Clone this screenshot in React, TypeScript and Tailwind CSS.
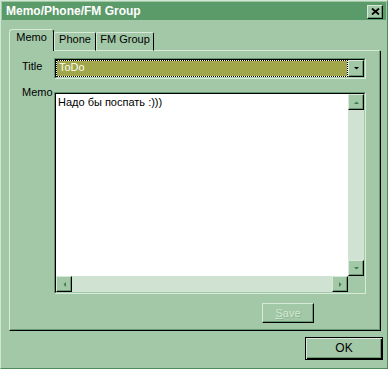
const raised =
  "border border-t-[#d7eada] border-l-[#d7eada] border-r-black border-b-black shadow-[inset_-1px_-1px_0_#6b9b73]";

function Arrow({ dir, color = "#3f7d4c" }: { dir: "up" | "down" | "left" | "right"; color?: string }) {
  const pts: Record<string, string> = {
    up: "0,3 5,3 2.5,0.5",
    down: "0,0 5,0 2.5,2.5",
    left: "3,0 3,5 0.5,2.5",
    right: "0,0 0,5 2.5,2.5",
  };
  const horiz = dir === "left" || dir === "right";
  return (
    <svg width={horiz ? 3 : 5} height={horiz ? 5 : 3} viewBox={horiz ? "0 0 3 5" : "0 0 5 3"}>
      <polygon points={pts[dir]} fill={color} />
    </svg>
  );
}

function ScrollButton({ dir }: { dir: "up" | "down" | "left" | "right" }) {
  return (
    <div className={`w-[16px] h-[16px] shrink-0 bg-[#a3c8a8] flex items-center justify-center ${raised}`}>
      <Arrow dir={dir} />
    </div>
  );
}

function Sunken({ className, children }: { className: string; children: React.ReactNode }) {
  return (
    <div className={`border border-t-[#66976f] border-l-[#66976f] border-r-[#d7eada] border-b-[#d7eada] ${className}`}>
      <div className="h-full border border-t-black border-l-black border-r-[#a3c8a8] border-b-[#a3c8a8]">
        {children}
      </div>
    </div>
  );
}

export default function App() {
  return (
    <div className="w-[388px] h-[369px] bg-[#a3c8a8] border border-[#d2e6d5] border-r-[#4e8a5b] border-b-[#4e8a5b] p-px flex flex-col font-['Liberation_Sans',Arial,sans-serif] text-[11px] leading-[13px] text-black">
      {/* title bar */}
      <div className="h-[18px] bg-[#5b9a69] flex items-center justify-between pl-[4px] pr-[3px]">
        <span className="text-[12px] leading-[14px] font-bold text-white">Memo/Phone/FM Group</span>
        <div className={`mt-px w-[16px] h-[14px] bg-[#a3c8a8] flex items-center justify-center ${raised}`}>
          <svg width="9" height="7" viewBox="0 0 9 7">
            <path d="M1 0.5 L8 6.5 M8 0.5 L1 6.5" stroke="#000" strokeWidth="1.8" />
          </svg>
        </div>
      </div>

      {/* tabs */}
      <div className="mt-[9px] ml-[7px] mr-[5px] h-[22px] flex items-end">
        <div className="w-[45px] h-[22px] border-l border-t border-[#d7eada] border-r border-r-black rounded-t-[3px] flex justify-center pt-[1px]">
          Memo
        </div>
        <div className="w-[42px] h-[19px] border-l border-t border-b border-[#d7eada] border-r border-r-black rounded-t-[2px] flex justify-center">
          Phone
        </div>
        <div className="w-[58px] h-[19px] border-l border-t border-b border-[#d7eada] border-r border-r-black rounded-t-[2px] flex justify-center">
          FM Group
        </div>
        <div className="flex-1 h-px bg-[#d7eada] mr-[2px]" />
      </div>

      {/* panel */}
      <div className="ml-[7px] w-[372px] h-[280px] border-l border-l-[#d7eada] border-r border-r-black border-b border-b-black shadow-[inset_-1px_-1px_0_#6b9b73] flex flex-col">
        <div className="mt-[7px] flex h-[21px]">
          <div className="w-[44px] pl-[12px] pt-[2px]">Title</div>
          <Sunken className="w-[312px] h-[21px]">
            <div className="h-full flex">
              <div className="flex-1 bg-white">
                <div className="h-full border border-dotted border-black bg-[#a1a64b] bg-clip-padding pl-[2px] text-[#fbfbef]">
                  ToDo
                </div>
              </div>
              <div className={`w-[16px] h-full bg-[#a3c8a8] flex items-center justify-center ${raised}`}>
                <Arrow dir="down" color="#000" />
              </div>
            </div>
          </Sunken>
        </div>

        <div className="mt-[7px] flex items-start">
          <div className="w-[44px] pl-[12px]">Memo</div>
          <div className="pt-[6px]">
            <Sunken className="w-[312px] h-[202px]">
              <div className="h-full flex flex-col">
                <div className="flex-1 flex">
                  <div className="flex-1 bg-white pl-[2px] pt-[2px]">Надо бы поспать :)))</div>
                  <div className="w-[16px] flex flex-col">
                    <ScrollButton dir="up" />
                    <div className="flex-1 bg-[#d0e3d2]" />
                    <ScrollButton dir="down" />
                  </div>
                </div>
                <div className="h-[16px] flex">
                  <ScrollButton dir="left" />
                  <div className="flex-1 bg-[#d0e3d2]" />
                  <ScrollButton dir="right" />
                  <div className="w-[16px] bg-[#a3c8a8]" />
                </div>
              </div>
            </Sunken>
          </div>
        </div>

        <div className="mt-[9px] pl-[252px]">
          <div className={`w-[52px] h-[20px] flex items-center justify-center text-[#d3e7d5] [text-shadow:1px_1px_0_#8cb593] ${raised}`}>
            <span>
              <span className="underline">S</span>ave
            </span>
          </div>
        </div>
      </div>

      {/* footer */}
      <div className="mt-[6px] flex justify-end pr-[3px]">
        <div className="w-[78px] h-[23px] border border-black shadow-[inset_1px_1px_0_#d7eada,inset_-1px_-1px_0_#000,inset_-2px_-2px_0_#6b9b73] flex items-center justify-center text-[12px]">
          OK
        </div>
      </div>
    </div>
  );
}
